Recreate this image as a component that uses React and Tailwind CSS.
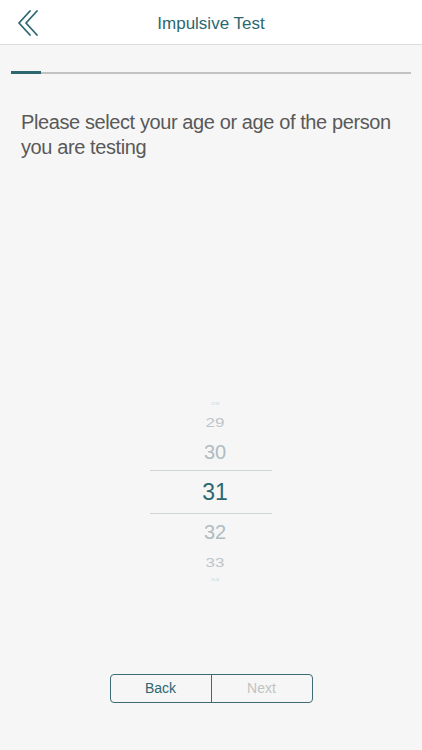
import React from 'react';

const teal = 'text-[#2d6770]';

const PickerRow = ({ h, size, color, scale, children, selected }) => (
  <div
    className={`flex items-center justify-center pl-[8px] ${h} ${selected ? 'border-y border-[#cfd4d6]' : ''}`}
  >
    <span className={`${size} ${color} ${scale} leading-none`}>{children}</span>
  </div>
);

const App = () => {
  return (
    <div className="min-h-[750px] w-full bg-[#f6f6f6] font-['Liberation_Sans',Arial,sans-serif] flex flex-col">
      {/* Header */}
      <div className="h-[45px] bg-white border-b border-[#dcdcdc] flex items-center relative">
        <button className="absolute left-[15px] top-[9px] w-[26px] h-[28px]">
          <svg width="26" height="28" viewBox="0 0 26 28" fill="none" stroke="#2d6770" strokeWidth="1.8" strokeLinecap="round" strokeLinejoin="round">
            <polyline points="15,2 4,14 15,26" />
            <polyline points="22,2 11,14 22,26" />
          </svg>
        </button>
        <h1 className={`w-full text-center pt-[3px] text-[17px] ${teal}`}>Impulsive Test</h1>
      </div>

      {/* Progress */}
      <div className="mt-[26px] mx-[11px] h-[3px] flex items-end">
        <div className="w-[30px] h-[3px] bg-[#2d6770]" />
        <div className="flex-1 h-[2px] bg-[#c2c2c2]" />
      </div>

      {/* Question */}
      <p className="mt-[36px] px-[21px] text-[20px] leading-[25px] tracking-[-0.4px] text-[#595959]">
        Please select your age or age of the person you are testing
      </p>

      {/* Picker */}
      <div className="mt-[238px] mx-auto w-[122px] flex flex-col">
        <PickerRow h="h-[12px]" size="text-[8px]" color="text-[#d2d8da]" scale="scale-y-[0.4]">28</PickerRow>
        <PickerRow h="h-[24px]" size="text-[17px]" color="text-[#bcc6c9]" scale="scale-y-[0.75]">29</PickerRow>
        <PickerRow h="h-[36px]" size="text-[20px]" color="text-[#afbcc0]" scale="">30</PickerRow>
        <PickerRow h="h-[44px]" size="text-[23px]" color={teal} scale="" selected>31</PickerRow>
        <PickerRow h="h-[36px]" size="text-[20px]" color="text-[#afbcc0]" scale="">32</PickerRow>
        <PickerRow h="h-[24px]" size="text-[17px]" color="text-[#bcc6c9]" scale="scale-y-[0.75]">33</PickerRow>
        <PickerRow h="h-[12px]" size="text-[8px]" color="text-[#d2d8da]" scale="scale-y-[0.4]">34</PickerRow>
      </div>

      {/* Buttons */}
      <div className="mt-[88px] mx-auto w-[203px] h-[29px] flex border border-[#3d6c74] rounded-[4px]">
        <button className={`flex-1 text-[14px] ${teal} border-r border-[#3d6c74]`}>Back</button>
        <button className="flex-1 text-[14px] text-[#c2c2c2]">Next</button>
      </div>
    </div>
  );
};

export default App;
